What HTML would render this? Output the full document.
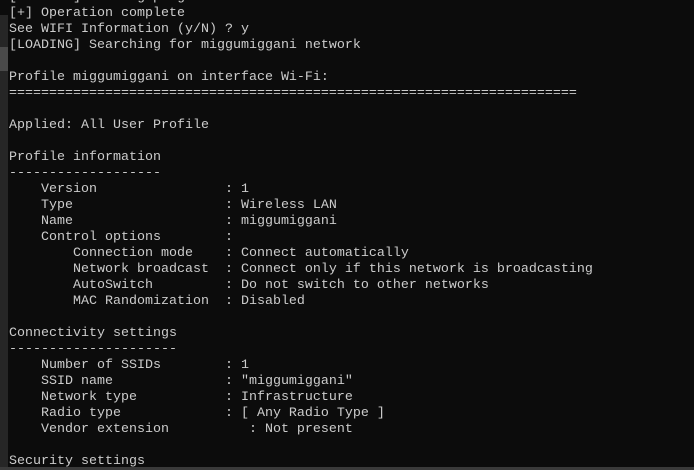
<!DOCTYPE html>
<html><head><meta charset="utf-8"><style>
html,body{margin:0;padding:0;background:#0c0c0c;width:694px;height:470px;overflow:hidden;position:relative}
pre{position:absolute;left:9px;top:-10px;margin:0;font-family:"Liberation Mono",monospace;font-size:13.33px;line-height:16px;color:#cccccc;white-space:pre}
.sb{position:absolute;left:0;top:15px;width:8px;height:452px;background:#262626}
.th{position:absolute;left:0;top:47px;width:8px;height:24px;background:#4a4a4a}
.bt{position:absolute;left:0;top:467px;width:694px;height:3px;background:#3a3a3a}
</style></head><body>
<div class="sb"></div><div class="th"></div><div class="bt"></div>
<pre>[LOADING] Loading program...
[+] Operation complete
See WIFI Information (y/N) ? y
[LOADING] Searching for miggumiggani network

Profile miggumiggani on interface Wi-Fi:
=======================================================================

Applied: All User Profile

Profile information
-------------------
    Version                : 1
    Type                   : Wireless LAN
    Name                   : miggumiggani
    Control options        :
        Connection mode    : Connect automatically
        Network broadcast  : Connect only if this network is broadcasting
        AutoSwitch         : Do not switch to other networks
        MAC Randomization  : Disabled

Connectivity settings
---------------------
    Number of SSIDs        : 1
    SSID name              : "miggumiggani"
    Network type           : Infrastructure
    Radio type             : [ Any Radio Type ]
    Vendor extension          : Not present

Security settings</pre>
</body></html>
